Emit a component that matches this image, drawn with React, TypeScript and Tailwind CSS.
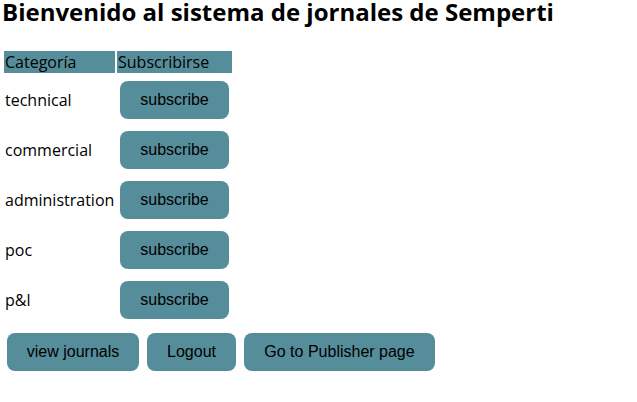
import React from 'react';

const categories = ['technical', 'commercial', 'administration', 'poc', 'p&l'];

function TealButton({ children, className = '' }: { children: React.ReactNode; className?: string }) {
  return (
    <button
      className={`h-[38px] rounded-lg bg-[#568d9b] text-[16px] text-black font-['Liberation_Sans',Arial,sans-serif] ${className}`}
    >
      {children}
    </button>
  );
}

export default function App() {
  return (
    <div className="min-h-[402px] w-[637px] bg-white font-['Open_Sans',sans-serif] text-black">
      <h1 className="pl-[2px] text-[24px] font-bold leading-[24px]">
        Bienvenido al sistema de jornales de Semperti
      </h1>

      <div className="mt-[27px] pl-1">
        <div className="flex gap-[2px]">
          <div className="h-[22px] w-[111px] bg-[#568d9b] pl-[1px] text-[16px] leading-[22px]">Categoría</div>
          <div className="h-[22px] w-[115px] bg-[#568d9b] pl-[1px] text-[16px] leading-[22px]">Subscribirse</div>
        </div>

        <div className="mt-[2px] flex flex-col">
          {categories.map(cat => (
            <div key={cat} className="flex h-[50px] items-center gap-[2px]">
              <div className="w-[111px] pl-[1px] text-[16px]">{cat}</div>
              <div className="w-[115px] pl-[3px]">
                <TealButton className="w-[109px]">subscribe</TealButton>
              </div>
            </div>
          ))}
        </div>
      </div>

      <div className="mt-[8px] flex gap-[8px] pl-[7px]">
        <TealButton className="w-[132px]">view journals</TealButton>
        <TealButton className="w-[89px]">Logout</TealButton>
        <TealButton className="w-[191px]">Go to Publisher page</TealButton>
      </div>
    </div>
  );
}
